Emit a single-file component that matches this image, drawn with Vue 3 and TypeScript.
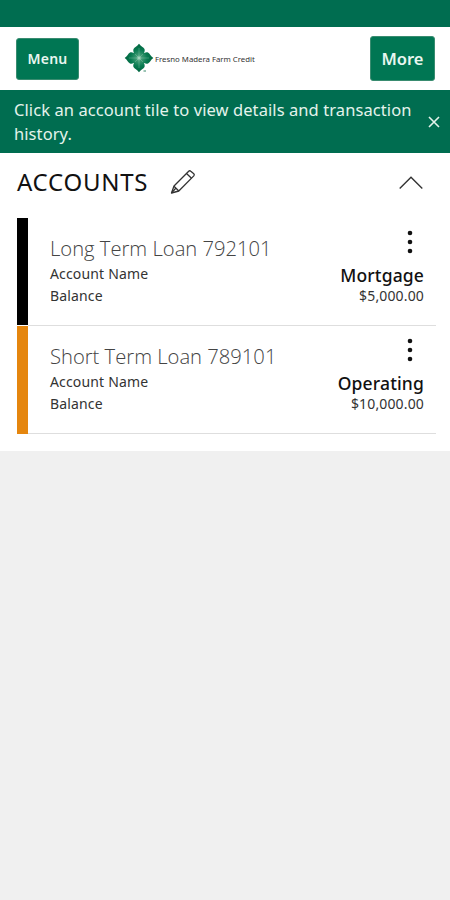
<script setup lang="ts">
interface Account {
  title: string
  kind: string
  balance: string
  tone: string
}

const accounts: Account[] = [
  { title: 'Long Term Loan 792101', kind: 'Mortgage', balance: '$5,000.00', tone: 'black' },
  { title: 'Short Term Loan 789101', kind: 'Operating', balance: '$10,000.00', tone: 'orange' },
]
</script>

<template>
  <div class="page">
    <div class="status-bar"></div>
    <header class="header">
      <button class="btn menu">Menu</button>
      <div class="brand">
        <svg class="leaf" width="30" height="32" viewBox="0 0 30 32">
          <defs>
            <radialGradient id="glow" gradientUnits="userSpaceOnUse" cx="15" cy="15" r="14">
              <stop offset="0" stop-color="#b5dfc9" />
              <stop offset="0.2" stop-color="#3f9b74" />
              <stop offset="0.6" stop-color="#087a50" />
              <stop offset="1" stop-color="#00643f" />
            </radialGradient>
          </defs>
          <g fill="url(#glow)">
            <path id="petal" d="M15 15C11 12 8.500 9 9.500 6C10.500 4 13 3.500 15 .7C17 3.500 19.500 4 20.500 6C21.500 9 19 12 15 15Z" />
            <use href="#petal" transform="rotate(90 15 15)" />
            <use href="#petal" transform="rotate(180 15 15)" />
            <use href="#petal" transform="rotate(270 15 15)" />
            <path d="M10 10H20V20H10Z" />
          </g>
          <path d="M15 5V25M5 15H25M11 11L19 19M19 11L11 19" stroke="#b5dfc9" stroke-width=".5" opacity=".55" />
          <path d="M19.500 28H22" stroke="#39896b" />
        </svg>
        <span class="brand-name">Fresno Madera Farm Credit</span>
      </div>
      <button class="btn more">More</button>
    </header>
    <div class="notice">
      <p class="notice-text">Click an account tile to view details and transaction history.</p>
      <svg class="close" width="12" height="12" viewBox="0 0 12 12">
        <path d="M1 1L11 11M11 1L1 11" stroke="#e4f3ec" stroke-width="1.600" />
      </svg>
    </div>
    <main class="panel">
      <div class="panel-head">
        <h1 class="heading">ACCOUNTS</h1>
        <svg class="pencil" width="26" height="26" viewBox="0 0 26 26" fill="none" stroke="#333" stroke-width="1.300" stroke-linejoin="round">
          <path d="M1.500 24L4 17L18.700 2.200Q19.700 1.200 20.800 2.200L23.800 4.800Q24.800 5.800 23.800 6.900L8.800 22Z" />
          <path d="M4 17.200L8.800 22M16.500 4.500L21.500 9.200M1.500 24L5.500 19.500" />
        </svg>
        <svg class="chevron" width="24" height="14" viewBox="0 0 24 14" fill="none" stroke="#333" stroke-width="1.400">
          <path d="M.7 12.500L12 1.200L23.300 12.500" />
        </svg>
      </div>
      <section v-for="a in accounts" :key="a.title" class="tile">
        <div class="stripe" :class="a.tone"></div>
        <div class="body">
          <div class="info">
            <h2 class="title">{{ a.title }}</h2>
            <div class="label">Account Name</div>
            <div class="label">Balance</div>
          </div>
          <div class="values">
            <svg class="dots" width="6" height="24" viewBox="0 0 6 24" fill="#111">
              <circle cx="3" cy="3" r="2.300" />
              <circle cx="3" cy="12" r="2.300" />
              <circle cx="3" cy="21" r="2.300" />
            </svg>
            <div class="kind">{{ a.kind }}</div>
            <div class="amount">{{ a.balance }}</div>
          </div>
        </div>
      </section>
    </main>
  </div>
</template>

<style>
body {
  background: #f0f0f0;
}
</style>

<style scoped>
.page {
  width: 450px;
  height: 900px;
  background: #f0f0f0;
  font-family: 'Noto Sans', 'Open Sans', sans-serif;
  color: #333;
}
.status-bar {
  height: 27px;
  background: #006d50;
}
.header {
  height: 63px;
  box-sizing: border-box;
  padding: 0 15px 0 16px;
  display: flex;
  align-items: center;
  background: #fff;
}
.btn {
  padding: 0;
  border: 1px solid #398c70;
  border-radius: 3px;
  background: #007653;
  color: #e9f6f0;
  font-family: inherit;
  font-weight: 600;
}
.menu {
  width: 63px;
  height: 42px;
  font-size: 14px;
  letter-spacing: 0.2px;
}
.more {
  width: 65px;
  height: 45px;
  margin-left: auto;
  font-size: 16.500px;
}
.brand {
  display: flex;
  align-items: center;
  margin-left: 45px;
}
.leaf {
  margin-top: 1px;
}
.brand-name {
  margin-left: 1px;
  font-size: 7.800px;
  line-height: 12px;
  white-space: nowrap;
}
.notice {
  height: 63px;
  box-sizing: border-box;
  padding: 8px 10px 0 14px;
  display: flex;
  background: #006d50;
  color: #e4f3ec;
}
.notice-text {
  margin: 0;
  width: 403px;
  font-size: 16.500px;
  line-height: 24px;
  letter-spacing: 0.080px;
}
.close {
  margin: 18px 0 0 auto;
  flex: none;
}
.panel {
  height: 298px;
  box-sizing: border-box;
  padding: 0 14px 0 16px;
  background: #fff;
}
.panel-head {
  height: 65px;
  display: flex;
}
.heading {
  margin: 13px 0 0 1px;
  width: 153px;
  font-size: 24px;
  line-height: 32px;
  letter-spacing: 0.750px;
  font-weight: 400;
  color: #111;
}
.pencil {
  margin-top: 16px;
}
.chevron {
  margin: 23px 13px 0 auto;
}
.tile {
  height: 108px;
  display: flex;
}
.stripe {
  width: 11px;
  margin-left: 1px;
}
.stripe.black {
  background: #000;
  margin-bottom: 1px;
}
.stripe.orange {
  background: #e5860e;
}
.body {
  flex: 1;
  display: flex;
  justify-content: space-between;
  border-bottom: 1px solid #dedede;
  padding: 12px 12px 0 22px;
}
.info {
  padding-top: 4px;
}
.title {
  margin: 0;
  font-family: 'Open Sans', 'Noto Sans', sans-serif;
  font-size: 20.200px;
  line-height: 29px;
  font-weight: 300;
  color: #444;
}
.label {
  font-size: 14px;
  line-height: 22px;
  letter-spacing: 0.160px;
}
.values {
  display: flex;
  flex-direction: column;
  align-items: flex-end;
}
.dots {
  margin-right: 11px;
}
.kind {
  margin-top: 9px;
  font-size: 17.500px;
  line-height: 24px;
  letter-spacing: 0.150px;
  font-weight: 500;
  color: #111;
}
.amount {
  font-size: 14px;
  line-height: 18px;
  letter-spacing: 0.150px;
}
</style>
